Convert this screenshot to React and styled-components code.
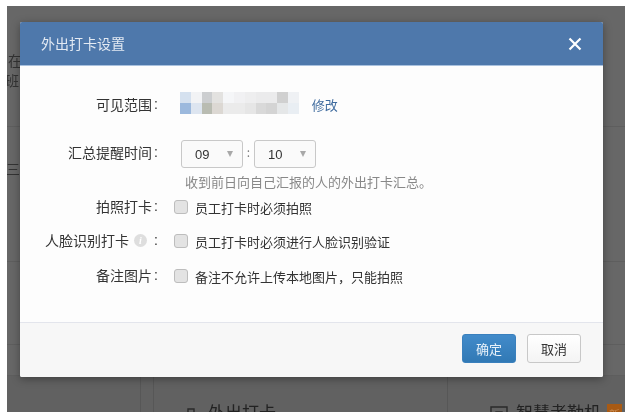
import React from 'react';
import styled, { createGlobalStyle } from 'styled-components';

const cjk = '"Noto Sans CJK SC", "Liberation Sans", sans-serif';

const GlobalStyle = createGlobalStyle`
  html, body {
    margin: 0;
    padding: 0;
    background: #fff;
    font-family: ${cjk};
  }
`;

const Shot = styled.div`
  width: 635px;
  height: 420px;
  padding: 6px 10px 8px 7px;
  box-sizing: border-box;
  filter: blur(0.35px);
`;

const Backdrop = styled.div`
  position: relative;
  height: 406px;
  background: #676767;
  overflow: hidden;
  display: flex;
  flex-direction: column;
`;

const BehindRow = styled.div`
  height: ${(p) => p.$h}px;
  flex: none;
  box-sizing: border-box;
  border-bottom: 1px solid ${(p) => (p.$line ? '#5e5e5e' : 'transparent')};
  padding-top: ${(p) => p.$top || 0}px;
  font-size: 14px;
  line-height: 20px;
  color: #333;
  white-space: nowrap;
  overflow: hidden;
`;

const BehindText = styled.div`
  margin-left: ${(p) => p.$left || 0}px;
`;

const BehindCards = styled.div`
  flex: 1;
  background: #616161;
  display: grid;
  grid-template-columns: 133px 13px 294px 13px 1fr;
`;

const Gutter = styled.div`
  border-left: 1px solid #575757;
`;

const BehindCard = styled.div`
  display: flex;
  align-items: flex-start;
  gap: 8px;
  padding: 24px 0 0 ${(p) => p.$left}px;
  font-size: 17px;
  line-height: 24px;
  color: #222;
  white-space: nowrap;
  border-left: ${(p) => (p.$edge ? '1px solid #575757' : '0')};
`;

const BehindIcon = styled.svg`
  flex: none;
  margin-top: 5px;
`;

const NewBadge = styled.span`
  width: 15px;
  height: 20px;
  background: #a85a14;
  color: #c98a50;
  font-size: 11px;
  line-height: 20px;
  text-align: center;
  margin: 4px 0 0 -2px;
  flex: none;
`;

const Dialog = styled.div`
  position: absolute;
  left: 13px;
  top: 16px;
  width: 583px;
  height: 355px;
  display: flex;
  flex-direction: column;
  background: #fdfdfd;
  border-radius: 2px;
  box-shadow: 0 2px 8px rgba(0, 0, 0, 0.35);
  overflow: hidden;
`;

const Header = styled.div`
  flex: none;
  height: 43px;
  display: flex;
  align-items: center;
  justify-content: space-between;
  padding: 0 21px;
  background: #4e78ab;
  border-bottom: 1px solid #a9c1de;
`;

const Title = styled.div`
  font-size: 14px;
  color: #e3eaf3;
  padding-bottom: 2px;
`;

const CloseIcon = styled.svg`
  display: block;
`;

const Body = styled.div`
  flex: 1;
  padding-top: 26px;
  display: flex;
  flex-direction: column;
`;

const Row = styled.div`
  display: grid;
  grid-template-columns: 138px 1fr;
  align-items: center;
  height: ${(p) => p.$h || 20}px;
  margin-top: ${(p) => p.$mt || 0}px;
`;

const Label = styled.div`
  display: flex;
  justify-content: flex-end;
  align-items: center;
  font-size: 14px;
  color: #333;
  white-space: nowrap;
  padding-bottom: ${(p) => p.$lift || 2}px;
`;

const LabelColon = styled.span`
  width: 6px;
  text-align: right;
  font: 14px "Liberation Sans", sans-serif;
`;

const InfoDot = styled.span`
  width: 13px;
  height: 13px;
  border-radius: 50%;
  background: #dedede;
  color: #fff;
  font: italic bold 10px/13px "Liberation Serif", serif;
  text-align: center;
  margin: 0 5px 0 5px;
`;

const Value = styled.div`
  display: flex;
  align-items: center;
  padding-left: ${(p) => p.$indent || 0}px;
  font-size: 13px;
  color: #333;
  white-space: nowrap;
`;

const Mosaic = styled.div`
  display: grid;
  grid-template-columns: repeat(11, 10.8px);
  grid-auto-rows: 11px;
  margin-bottom: 4px;
`;

const MosaicCell = styled.div`
  background: ${(p) => p.$c};
`;

const EditLink = styled.a`
  color: #3f6b9e;
  font-size: 13px;
  margin-left: 13px;
  padding-bottom: 2px;
`;

const SelectBox = styled.div`
  width: 62px;
  height: 28px;
  box-sizing: border-box;
  display: flex;
  align-items: center;
  justify-content: space-between;
  padding: 0 9px 0 13px;
  background: #fafafa;
  border: 1px solid #c8c8c8;
  border-radius: 3px;
  font: 13px "Liberation Sans", sans-serif;
  color: #333;
`;

const Caret = styled.span`
  width: 0;
  height: 0;
  border-left: 3.5px solid transparent;
  border-right: 3.5px solid transparent;
  border-top: 6px solid #a8a8a8;
`;

const TimeColon = styled.span`
  width: 11px;
  text-align: center;
  font-size: 12px;
  color: #777;
  position: relative;
  top: -3px;
`;

const Hint = styled.div`
  font-size: 13px;
  color: #888;
`;

const CheckLine = styled.label`
  display: flex;
  align-items: center;
  gap: 7px;
`;

const CheckBox = styled.span`
  width: 14px;
  height: 14px;
  box-sizing: border-box;
  flex: none;
  border: 1px solid #bdbdbd;
  border-radius: 3px;
  background: #e3e3e3;
`;

const CheckText = styled.span`
  font-size: 13px;
  color: #333;
`;

const Footer = styled.div`
  flex: none;
  height: 55px;
  box-sizing: border-box;
  display: flex;
  justify-content: flex-end;
  align-items: center;
  gap: 11px;
  padding: 0 22px 3px 0;
  background: #f7f7f7;
  border-top: 1px solid #e3e5ec;
`;

const Button = styled.button`
  width: 54px;
  height: 29px;
  padding: 0;
  border-radius: 3px;
  font: 13px ${cjk};
  border: 1px solid ${(p) => (p.$primary ? '#3a80bd' : '#c8c8c8')};
  color: ${(p) => (p.$primary ? '#e8f1f9' : '#333')};
  background: ${(p) =>
    p.$primary
      ? 'linear-gradient(#428bca, #3179b5)'
      : 'linear-gradient(#fff, #f4f4f4)'};
`;

const mosaicColors = [
  '#d5e1ef', '#f2f3f5', '#ccced0', '#e3e2e0', '#f5f6f8', '#f1f1f3', '#eeeeef', '#ebebec', '#ebebec', '#d0d0d0', '#eff1f4',
  '#9cb9dd', '#dde5f0', '#b9bcb2', '#dcd8d3', '#ebebeb', '#ebebeb', '#e6e6e6', '#d9d9d9', '#d4d4d4', '#e5e7e8', '#e9eef3',
];

const Select = ({ value }) => (
  <SelectBox>
    {value}
    <Caret />
  </SelectBox>
);

const Check = ({ text }) => (
  <CheckLine>
    <CheckBox />
    <CheckText>{text}</CheckText>
  </CheckLine>
);

const App = () => (
  <Shot>
    <GlobalStyle />
    <Backdrop>
      <BehindRow $h={121} $line $top={44}>
        <BehindText $left={1}>在</BehindText>
        <BehindText $left={-2}>班</BehindText>
      </BehindRow>
      <BehindRow $h={55} $top={31}>
        <BehindText $left={-1}>三</BehindText>
      </BehindRow>
      <BehindRow $h={80} $line />
      <BehindRow $h={83} $line />
      <BehindRow $h={31} $line />
      <BehindCards>
        <div />
        <Gutter />
        <BehindCard $left={28} $edge>
          <BehindIcon width="18" height="18" viewBox="0 0 18 18" fill="none" stroke="#2a2a2a" strokeWidth="1.4">
            <path d="M1 8h16v9H1zM6 8V4h6v4" />
          </BehindIcon>
          外出打卡
        </BehindCard>
        <Gutter />
        <BehindCard $left={30}>
          <BehindIcon width="18" height="18" viewBox="0 0 18 18" fill="none" stroke="#2a2a2a" strokeWidth="1.4">
            <path d="M1 2h16v14H1zM6 7h6v6H6z" />
          </BehindIcon>
          智慧考勤机
          <NewBadge>新</NewBadge>
        </BehindCard>
      </BehindCards>

      <Dialog>
        <Header>
          <Title>外出打卡设置</Title>
          <CloseIcon width="14" height="14" viewBox="0 0 14 14" fill="none" stroke="#fff" strokeWidth="2.2">
            <path d="M1.5 1.5l11 11M12.5 1.5l-11 11" />
          </CloseIcon>
        </Header>
        <Body>
          <Row $h={26}>
            <Label>
              可见范围<LabelColon>:</LabelColon>
            </Label>
            <Value $indent={22}>
              <Mosaic>
                {mosaicColors.map((c, i) => (
                  <MosaicCell key={i} $c={c} />
                ))}
              </Mosaic>
              <EditLink>修改</EditLink>
            </Value>
          </Row>
          <Row $h={28} $mt={22}>
            <Label $lift={4}>
              汇总提醒时间<LabelColon>:</LabelColon>
            </Label>
            <Value $indent={23}>
              <Select value="09" />
              <TimeColon>:</TimeColon>
              <Select value="10" />
            </Value>
          </Row>
          <Row $h={16} $mt={4}>
            <div />
            <Value $indent={27}>
              <Hint>收到前日向自己汇报的人的外出打卡汇总。</Hint>
            </Value>
          </Row>
          <Row $mt={8}>
            <Label>
              拍照打卡<LabelColon>:</LabelColon>
            </Label>
            <Value $indent={16}>
              <Check text="员工打卡时必须拍照" />
            </Value>
          </Row>
          <Row $mt={14}>
            <Label>
              人脸识别打卡
              <InfoDot>i</InfoDot>
              <LabelColon>:</LabelColon>
            </Label>
            <Value $indent={16}>
              <Check text="员工打卡时必须进行人脸识别验证" />
            </Value>
          </Row>
          <Row $mt={15}>
            <Label>
              备注图片<LabelColon>:</LabelColon>
            </Label>
            <Value $indent={16}>
              <Check text="备注不允许上传本地图片，只能拍照" />
            </Value>
          </Row>
        </Body>
        <Footer>
          <Button $primary>确定</Button>
          <Button>取消</Button>
        </Footer>
      </Dialog>
    </Backdrop>
  </Shot>
);

export default App;
